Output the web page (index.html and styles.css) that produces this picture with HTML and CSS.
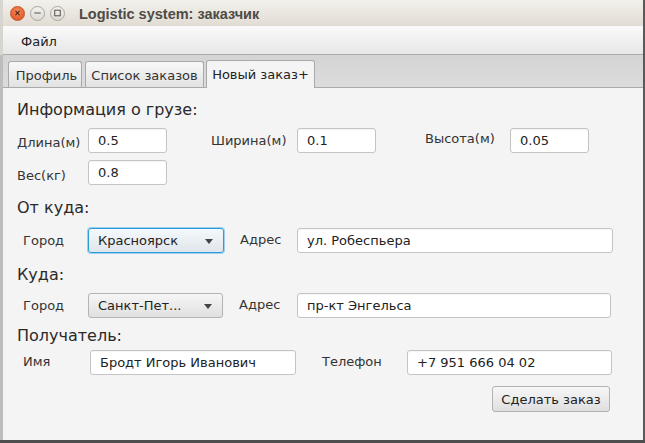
FILE: index.html
```html
<!DOCTYPE html>
<html lang="ru">
<head>
<meta charset="utf-8">
<title>Logistic system: заказчик</title>
<link rel="stylesheet" href="styles.css">
</head>
<body>
<div class="desk">
  <div class="leftstrip"></div>
  <div class="window">
    <div class="titlebar">
      <div class="wbtns">
        <span class="wbtn close"><svg width="14" height="14" viewBox="0 0 14 14"><path d="M4.8 4.8 L9.2 9.2 M9.2 4.8 L4.8 9.2" stroke="#4a2418" stroke-width="1.2" fill="none"/></svg></span>
        <span class="wbtn"><svg width="14" height="14" viewBox="0 0 14 14"><path d="M3.5 7 H10.5" stroke="#5a5650" stroke-width="1.1" fill="none"/></svg></span>
        <span class="wbtn"><svg width="14" height="14" viewBox="0 0 14 14"><rect x="4" y="4" width="6" height="6" stroke="#5a5650" stroke-width="1.1" fill="none"/></svg></span>
      </div>
      <div class="wtitle">Logistic system: заказчик</div>
    </div>
    <div class="menubar"><span class="menu">Файл</span></div>
    <div class="tabbar">
      <div class="tab t1">Профиль</div>
      <div class="tab t2">Список заказов</div>
      <div class="tab t3 sel">Новый заказ+</div>
    </div>
    <div class="content">
      <div class="heading h-cargo">Информация о грузе:</div>
      <div class="cargo">
        <div class="lbl c-l1">Длина(м)</div>
        <div class="field c-f1">0.5</div>
        <div class="lbl c-l2">Ширина(м)</div>
        <div class="field c-f2">0.1</div>
        <div class="lbl c-l3">Высота(м)</div>
        <div class="field c-f3">0.05</div>
        <div class="lbl c-l4">Вес(кг)</div>
        <div class="field c-f4">0.8</div>
      </div>
      <div class="heading h-from">От куда:</div>
      <div class="row r-from">
        <div class="lbl city">Город</div>
        <div class="combo focused"><span class="ctext">Красноярск</span><span class="arrow"></span></div>
        <div class="lbl addr">Адрес</div>
        <div class="field wide">ул. Робеспьера</div>
      </div>
      <div class="heading h-to">Куда:</div>
      <div class="row r-to">
        <div class="lbl city">Город</div>
        <div class="combo c2"><span class="ctext">Санкт-Пет...</span><span class="arrow"></span></div>
        <div class="lbl addr a2">Адрес</div>
        <div class="field wide w2">пр-кт Энгельса</div>
      </div>
      <div class="heading h-rec">Получатель:</div>
      <div class="row r-rec">
        <div class="lbl name">Имя</div>
        <div class="field fname">Бродт Игорь Иванович</div>
        <div class="lbl phone">Телефон</div>
        <div class="field fphone">+7 951 666 04 02</div>
      </div>
      <div class="actions"><div class="button">Сделать заказ</div></div>
    </div>
  </div>
  <div class="rightstrip"></div>
</div>
</body>
</html>
```

FILE: styles.css
```css
html, body {
  margin: 0;
  padding: 0;
}
body {
  width: 645px;
  height: 443px;
  overflow: hidden;
  background: #4e4e4e;
  font-family: "DejaVu Sans", "Noto Sans", sans-serif;
  color: #333;
}
.desk {
  display: flex;
  height: 440px;
}
.leftstrip {
  width: 3px;
  background: linear-gradient(#d7d5cf 0, #d7d5cf 55px, #bdbdbd 55px);
}
.rightstrip {
  width: 2px;
  background: #5a5a5a;
}
.window {
  width: 640px;
  height: 440px;
  display: flex;
  flex-direction: column;
  background: #f4f4f4;
}
.titlebar {
  height: 26px;
  display: flex;
  align-items: center;
  background: linear-gradient(#f3f1ec, #e1dcd3);
}
.wbtns {
  display: flex;
  gap: 5px;
  margin-left: 7px;
}
.wbtn {
  width: 13px;
  height: 13px;
  border-radius: 50%;
  border: 1px solid #aba79f;
  background: linear-gradient(#f4f3f0, #dcd9d3);
  display: flex;
  align-items: center;
  justify-content: center;
}
.wbtn svg { display: block; }
.wbtn.close {
  border-color: #c4542e;
  background: radial-gradient(circle at 50% 35%, #f58c5f, #e35d2e 70%);
}
.wtitle {
  margin-left: 14px;
  font-family: "Liberation Sans", sans-serif;
  font-weight: bold;
  font-size: 14.5px;
  color: #4d4b47;
  margin-top: 1px;
}
.menubar {
  height: 28px;
  background: linear-gradient(#fafafa, #e7e7e7);
  border-bottom: 1px solid #acacac;
  display: flex;
  align-items: center;
}
.menu {
  margin-left: 18px;
  font-size: 13px;
  color: #222;
  margin-top: 2px;
}
.tabbar {
  height: 33px;
  box-sizing: border-box;
  background: linear-gradient(#d4d4d4, #dcdcdc);
  border-bottom: 1px solid #aaaaaa;
  display: flex;
  align-items: flex-end;
  padding-left: 5px;
}
.tab {
  box-sizing: border-box;
  height: 26px;
  border: 1px solid #a9a9a9;
  border-bottom: none;
  border-radius: 3px 3px 0 0;
  background: linear-gradient(#f8f8f8, #e2e2e2);
  font-size: 13px;
  color: #333;
  display: flex;
  align-items: center;
  justify-content: center;
  padding-top: 1px;
}
.t1 { width: 74px; margin-right: 3px; padding-left: 3px; }
.t2 { width: 119px; margin-right: 2px; }
.t3 { width: 109px; }
.tab.sel {
  height: 28px;
  margin-bottom: -1px;
  background: #f4f4f4;
  color: #222;
  padding-top: 0;
}
.content {
  flex: 1;
  padding-left: 14px;
  display: flex;
  flex-direction: column;
  align-items: flex-start;
}
.heading {
  font-size: 16px;
  line-height: 20px;
  height: 20px;
  color: #2a2a2a;
}
.h-cargo { margin-top: 12px; }
.h-from { margin-top: 13px; }
.h-to { margin-top: 12px; }
.h-rec { margin-top: 8px; }
.lbl {
  font-size: 13px;
  color: #333;
}
.field {
  box-sizing: border-box;
  height: 25px;
  border: 1px solid #c4c4c4;
  border-radius: 3px;
  background: #fff;
  box-shadow: inset 0 1px 1px rgba(0,0,0,0.04);
  font-size: 13px;
  color: #222;
  padding-left: 9px;
  display: flex;
  align-items: center;
}
.cargo {
  margin-top: 8px;
  display: grid;
  grid-template-columns: 71px 79px 44px 86px 79px 49px 85px 79px;
  grid-template-rows: 25px 25px;
  row-gap: 7px;
  align-items: center;
}
.c-l1 { grid-column: 1; grid-row: 1; margin-top: 3px; }
.c-f1 { grid-column: 2; grid-row: 1; }
.c-l2 { grid-column: 4; grid-row: 1; margin-top: -1px; }
.c-f2 { grid-column: 5; grid-row: 1; }
.c-l3 { grid-column: 7; grid-row: 1; margin-top: -4px; }
.c-f3 { grid-column: 8; grid-row: 1; }
.c-l4 { grid-column: 1; grid-row: 2; margin-top: 6px; }
.c-f4 { grid-column: 2; grid-row: 2; }
.row {
  display: flex;
  align-items: center;
  height: 25px;
}
.r-from { margin-top: 10px; }
.r-to { margin-top: 8px; }
.r-rec { margin-top: 4px; }
.city { width: 65px; margin-left: 6px; }
.combo {
  box-sizing: border-box;
  width: 136px;
  height: 25px;
  border: 1px solid #b3b3b3;
  border-radius: 3px;
  background: linear-gradient(#f6f6f6, #e0e0e0);
  display: flex;
  align-items: center;
  justify-content: space-between;
  padding: 0 10px 0 9px;
  font-size: 13px;
  color: #222;
}
.combo.focused {
  border-color: #2b9cd8;
  box-shadow: 0 0 0 1px #9ed0ee;
  background: linear-gradient(#f4f9fc, #dfe5ea);
}
.combo.c2 { width: 135px; }
.arrow {
  width: 0;
  height: 0;
  border-left: 4px solid transparent;
  border-right: 4px solid transparent;
  border-top: 5px solid #444;
  margin-top: 1px;
}
.addr { width: 57px; margin-left: 16px; margin-top: -2px; }
.a2 { margin-left: 16px; width: 58px; }
.wide { width: 316px; }
.w2 { width: 314px; }
.name { width: 67px; margin-left: 6px; margin-top: -2px; }
.fname { width: 206px; }
.phone { width: 85px; margin-left: 26px; margin-top: -2px; }
.fphone { width: 205px; }
.actions {
  margin-top: 11px;
  margin-left: 475px;
}
.button {
  box-sizing: border-box;
  width: 118px;
  height: 26px;
  border: 1px solid #b2b2b2;
  border-radius: 3px;
  background: linear-gradient(#f7f7f7, #dfdfdf);
  font-size: 13px;
  color: #222;
  display: flex;
  align-items: center;
  justify-content: center;
}
```
